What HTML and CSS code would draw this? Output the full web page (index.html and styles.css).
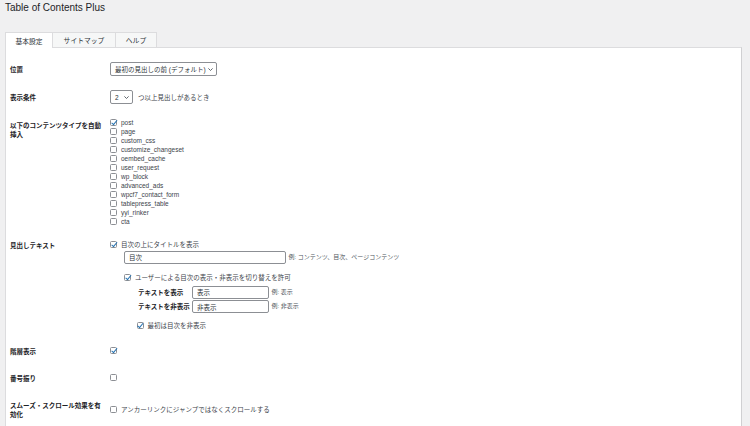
FILE: index.html
```html
<!DOCTYPE html>
<html lang="ja">
<head>
  <meta charset="UTF-8">
  <meta name="viewport" content="width=device-width, initial-scale=1.0">
  <title>Table of Contents Plus</title>
  <link rel="stylesheet" href="styles.css">
</head>
<body>

  <!-- PAGE
   ================================================== -->
  <div class="wrap">
    <h1 class="page-title">Table of Contents Plus</h1>

    <!-- TABS -->
    <nav class="tabs">
      <a class="tab tab-active tab-main">基本設定</a>
      <a class="tab tab-sitemap">サイトマップ</a>
      <a class="tab tab-help">ヘルプ</a>
    </nav>

    <!-- SETTINGS PANEL
     ================================================== -->
    <div class="panel">
      <table class="form-table">
        <tbody>
          <tr>
            <th>位置</th>
            <td>
              <span class="select select-wide">
                <span>最初の見出しの前 (デフォルト)</span>
                <svg width="5" height="3" viewBox="0 0 5 3"><path d="M0.4 0.4L2.5 2.5L4.6 0.4" fill="none" stroke="#50575e" stroke-width="0.9"/></svg>
              </span>
            </td>
          </tr>
          <tr>
            <th>表示条件</th>
            <td>
              <div class="inline-field">
                <span class="select select-small">
                  <span>2</span>
                  <svg width="5" height="3" viewBox="0 0 5 3"><path d="M0.4 0.4L2.5 2.5L4.6 0.4" fill="none" stroke="#50575e" stroke-width="0.9"/></svg>
                </span>
                <span class="after-text">つ以上見出しがあるとき</span>
              </div>
            </td>
          </tr>
          <tr>
            <th>以下のコンテンツタイプを自動挿入</th>
            <td>
              <label class="check-line"><input type="checkbox" checked>post</label>
              <label class="check-line"><input type="checkbox">page</label>
              <label class="check-line"><input type="checkbox">custom_css</label>
              <label class="check-line"><input type="checkbox">customize_changeset</label>
              <label class="check-line"><input type="checkbox">oembed_cache</label>
              <label class="check-line"><input type="checkbox">user_request</label>
              <label class="check-line"><input type="checkbox">wp_block</label>
              <label class="check-line"><input type="checkbox">advanced_ads</label>
              <label class="check-line"><input type="checkbox">wpcf7_contact_form</label>
              <label class="check-line"><input type="checkbox">tablepress_table</label>
              <label class="check-line"><input type="checkbox">yyi_rinker</label>
              <label class="check-line"><input type="checkbox">cta</label>
            </td>
          </tr>
          <tr>
            <th class="th-heading">見出しテキスト</th>
            <td>
              <label class="check-line"><input type="checkbox" checked>目次の上にタイトルを表示</label>
              <div class="indent heading-field">
                <input class="text-input text-wide" type="text" value="目次">
                <span class="hint">例: コンテンツ、目次、ページコンテンツ</span>
              </div>
              <div class="indent toggle-block">
                <label class="check-line"><input type="checkbox" checked>ユーザーによる目次の表示・非表示を切り替えを許可</label>
                <div class="toggle-grid">
                  <span class="sub-label">テキストを表示</span>
                  <input class="text-input text-small" type="text" value="表示">
                  <span class="hint">例: 表示</span>
                  <span class="sub-label">テキストを非表示</span>
                  <input class="text-input text-small" type="text" value="非表示">
                  <span class="hint">例: 非表示</span>
                </div>
                <label class="check-line hide-first"><input type="checkbox" checked>最初は目次を非表示</label>
              </div>
            </td>
          </tr>
          <tr>
            <th>階層表示</th>
            <td><label class="check-line"><input type="checkbox" checked></label></td>
          </tr>
          <tr>
            <th>番号振り</th>
            <td><label class="check-line"><input type="checkbox"></label></td>
          </tr>
          <tr>
            <th>スムーズ・スクロール効果を有効化</th>
            <td><label class="check-line"><input type="checkbox">アンカーリンクにジャンプではなくスクロールする</label></td>
          </tr>
        </tbody>
      </table>
    </div>

  </div>
</body>
</html>
```

FILE: styles.css
```css
* {
  box-sizing: border-box;
  font-family: "Liberation Sans", "Noto Sans CJK JP", sans-serif;
}

body {
  margin: 0;
  background: #f0f0f1;
  color: #3c434a;
  font-size: 6.5px;
}

.wrap {
  padding: 0 8px 0 5px;
}
  .page-title {
    margin: 0;
    padding-top: 2px;
    color: #1d2327;
    font-size: 10px;
    font-weight: 400;
    line-height: 12px;
  }

/* TABS */
.tabs {
  display: flex;
  margin-top: 18px;
  height: 15px;
}
  .tab {
    display: flex;
    align-items: center;
    justify-content: center;
    height: 15px;
    background: #f6f7f7;
    border: 1px solid #dcdcde;
    border-bottom: none;
    margin-right: -1px;
    color: #2c3338;
    font-size: 6.8px;
  }
  .tab-active {
    background: #fff;
    position: relative;
    z-index: 1;
    height: 16px;
  }
  .tab-main { width: 48px; }
  .tab-sitemap { width: 64px; }
  .tab-help { width: 42px; }

/* PANEL */
.panel {
  background: #fff;
  border: 1px solid #dcdcde;
  border-right-color: #d0d0d2;
  padding: 7px 4px 0;
  min-height: 400px;
}

.form-table {
  border-collapse: collapse;
}
  .form-table th {
    width: 100px;
    padding: 10px 5px 8px 0;
    color: #1d2327;
    font-weight: bold;
    line-height: 9px;
    text-align: left;
    vertical-align: top;
  }
  .form-table .th-heading {
    padding-top: 8px;
  }
  .form-table td {
    padding: 7px 0;
    line-height: 9px;
    vertical-align: middle;
  }

/* SELECTS */
.select {
  display: flex;
  align-items: center;
  justify-content: space-between;
  height: 14px;
  border: 1px solid #8c8f94;
  border-radius: 2px;
  padding: 0 3.5px 0 4px;
  color: #2c3338;
}
.select-wide { width: 107px; }
.select-small { width: 23px; }

.inline-field {
  display: flex;
  align-items: center;
}
  .after-text {
    margin-left: 5px;
  }

/* CHECKBOXES */
.check-line {
  display: flex;
  align-items: center;
  height: 9px;
  white-space: nowrap;
}
  .check-line input {
    appearance: none;
    position: relative;
    flex: none;
    width: 7px;
    height: 7px;
    margin: 0 4px 0 0;
    border: 1px solid #8c8f94;
    border-radius: 1.5px;
    background: #fff;
  }
  .check-line input:checked::before {
    content: "";
    position: absolute;
    left: 1.8px;
    top: -0.8px;
    width: 2.2px;
    height: 4.6px;
    border: solid #2271b1;
    border-width: 0 1.2px 1.2px 0;
    transform: rotate(40deg);
  }

/* HEADING TEXT */
.indent {
  margin-left: 14px;
}
.heading-field {
  display: flex;
  align-items: center;
  margin-top: 1.5px;
}
.text-input {
  height: 13px;
  border: 1px solid #8c8f94;
  border-radius: 2px;
  padding: 0 4px;
  color: #2c3338;
  font-size: 6.5px;
}
.text-wide { width: 162px; }
.text-small { width: 77px; }

.hint {
  margin-left: 2.5px;
  color: #50575e;
  font-size: 6px;
}

.toggle-block {
  margin-top: 9.5px;
}
  .toggle-grid {
    display: grid;
    grid-template-columns: 54px auto 1fr;
    row-gap: 1.5px;
    align-items: center;
    margin: 3.5px 0 0 14px;
  }
    .sub-label {
      color: #1d2327;
      font-weight: bold;
    }
  .hide-first {
    margin: 8px 0 0 12.5px;
  }
```
